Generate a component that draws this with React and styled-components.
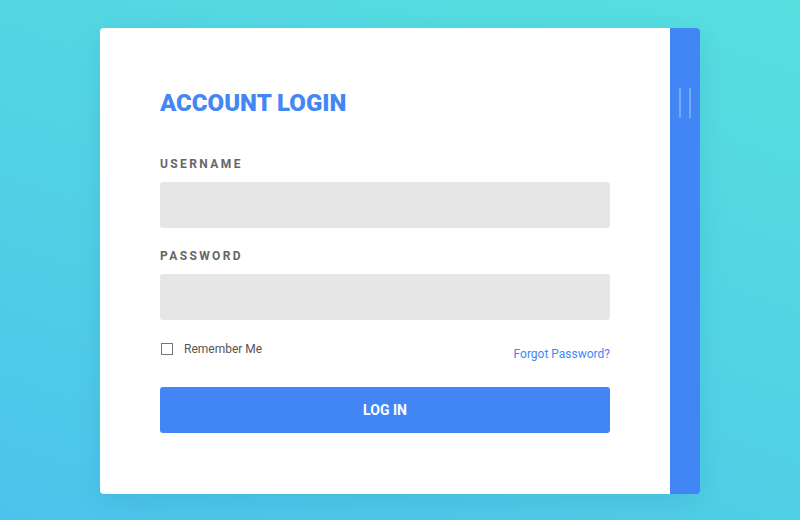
import React, { useState } from "react"
import styled, { createGlobalStyle } from "styled-components"

const GlobalStyle = createGlobalStyle`
  html, body {
    margin: 0;
    padding: 0;
  }
  body {
    font-family: Roboto, "Liberation Sans", Arial, sans-serif;
  }
`

const Page = styled.div`
  width: 800px;
  height: 520px;
  background: linear-gradient(20deg, #4cc3ec 0%, #52d3e4 50%, #56dfdf 100%);
  padding-top: 28px;
  box-sizing: border-box;
  overflow: hidden;
`

const Card = styled.div`
  width: 600px;
  height: 466px;
  margin-left: 100px;
  display: flex;
  border-radius: 4px;
  overflow: hidden;
  box-shadow: 0 8px 24px rgba(20, 80, 140, 0.12);
`

const Body = styled.div`
  flex: 1;
  background: #fff;
  padding: 60px 60px 0 60px;
`

const Strip = styled.div`
  width: 30px;
  background: #4286f5;
  display: flex;
  justify-content: center;
  gap: 8px;
  padding-top: 60px;
  box-sizing: border-box;
`

const StripLine = styled.div`
  width: 2px;
  height: 30px;
  background: rgba(255, 255, 255, 0.28);
`

const Title = styled.h1`
  margin: 0 0 39px 0;
  font-size: 24px;
  font-weight: 900;
  color: #4287f5;
  line-height: 30px;
`

const Label = styled.label`
  display: block;
  font-size: 12px;
  font-weight: 700;
  letter-spacing: 2.4px;
  color: #666;
  line-height: 14px;
  margin-bottom: 11px;
`

const Input = styled.input`
  display: block;
  width: 100%;
  height: 46px;
  box-sizing: border-box;
  border: none;
  border-radius: 3px;
  background: #e6e6e6;
  margin-bottom: ${props => props.gap}px;
  outline: none;
`

const Options = styled.div`
  display: flex;
  justify-content: space-between;
  align-items: flex-start;
  height: 45px;
  margin-top: 22px;
`

const Remember = styled.div`
  display: flex;
  align-items: center;
  font-size: 12px;
  color: #555;
  line-height: 14px;
`

const Box = styled.span`
  width: 10px;
  height: 10px;
  border: 1px solid #777;
  margin: 0 11px 0 1px;
  background: #fff;
`

const Forgot = styled.a`
  font-size: 12px;
  color: #4287f5;
  text-decoration: none;
  margin-top: 5px;
  line-height: 14px;
`

const Button = styled.button`
  display: block;
  width: 100%;
  height: 46px;
  border: none;
  border-radius: 3px;
  background: #4286f5;
  color: #fff;
  font-family: Roboto, "Liberation Sans", Arial, sans-serif;
  font-size: 14px;
  font-weight: 700;
`

const App = () => {
  const [remember, setRemember] = useState(false)
  return (
    <>
      <GlobalStyle />
      <Page>
        <Card>
          <Body>
            <Title>ACCOUNT LOGIN</Title>
            <Label>USERNAME</Label>
            <Input gap={21} />
            <Label>PASSWORD</Label>
            <Input type="password" gap={0} />
            <Options>
              <Remember onClick={() => setRemember(!remember)}>
                <Box />
                Remember Me
              </Remember>
              <Forgot href="#">Forgot Password?</Forgot>
            </Options>
            <Button>LOG IN</Button>
          </Body>
          <Strip>
            <StripLine />
            <StripLine />
          </Strip>
        </Card>
      </Page>
    </>
  )
}

export default App
